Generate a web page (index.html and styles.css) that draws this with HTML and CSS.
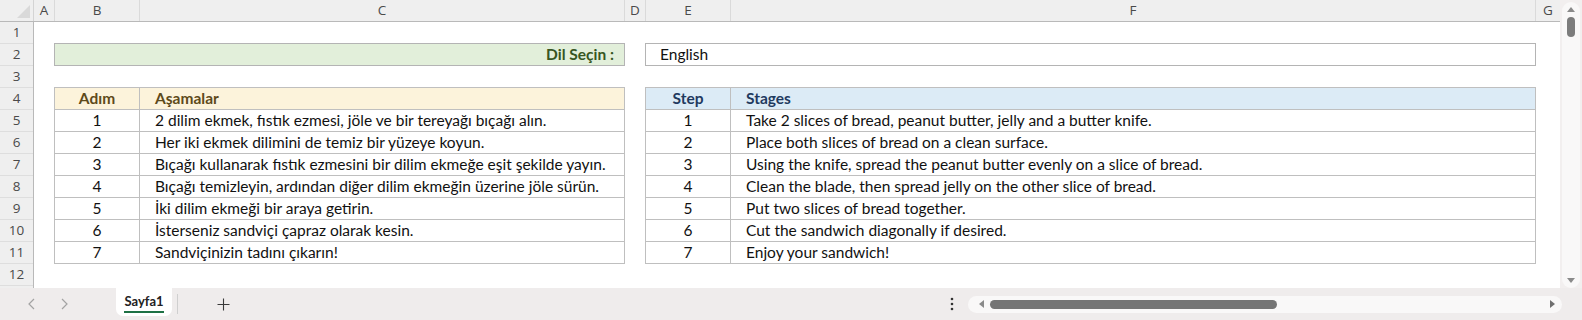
FILE: index.html
```html
<!DOCTYPE html>
<html lang="tr">
<head>
<meta charset="utf-8">
<title>Sayfa1</title>
<link rel="stylesheet" href="styles.css">
</head>
<body>
<div class="app">
  <div class="top">
    <div class="sheet">
      <div class="colhdr">
        <div class="corner">
          <svg width="33" height="21" viewBox="0 0 33 21"><polygon points="17,18 30,18 30,5" fill="#d9d9d9"/></svg>
        </div>
        <div class="ch w-a">A</div>
        <div class="ch w-b">B</div>
        <div class="ch w-c">C</div>
        <div class="ch w-d">D</div>
        <div class="ch w-e">E</div>
        <div class="ch w-f">F</div>
        <div class="ch w-g">G</div>
      </div>
      <div class="body">
        <div class="rowhdr">
          <div class="rh">1</div><div class="rh">2</div><div class="rh">3</div><div class="rh">4</div>
          <div class="rh">5</div><div class="rh">6</div><div class="rh">7</div><div class="rh">8</div>
          <div class="rh">9</div><div class="rh">10</div><div class="rh">11</div><div class="rh">12</div>
        </div>
        <div class="content">
          <div class="spacer"></div>
          <div class="langrow">
            <div class="langlabel">Dil Seçin :</div>
            <div class="langvalue">English</div>
          </div>
          <div class="spacer"></div>
          <div class="tables">
            <div class="tbl tbl-tr">
              <div class="tr thead"><div class="c num">Adım</div><div class="c txt">Aşamalar</div></div>
              <div class="tr"><div class="c num">1</div><div class="c txt">2 dilim ekmek, fıstık ezmesi, jöle ve bir tereyağı bıçağı alın.</div></div>
              <div class="tr"><div class="c num">2</div><div class="c txt">Her iki ekmek dilimini de temiz bir yüzeye koyun.</div></div>
              <div class="tr"><div class="c num">3</div><div class="c txt">Bıçağı kullanarak fıstık ezmesini bir dilim ekmeğe eşit şekilde yayın.</div></div>
              <div class="tr"><div class="c num">4</div><div class="c txt">Bıçağı temizleyin, ardından diğer dilim ekmeğin üzerine jöle sürün.</div></div>
              <div class="tr"><div class="c num">5</div><div class="c txt">İki dilim ekmeği bir araya getirin.</div></div>
              <div class="tr"><div class="c num">6</div><div class="c txt">İsterseniz sandviçi çapraz olarak kesin.</div></div>
              <div class="tr"><div class="c num">7</div><div class="c txt">Sandviçinizin tadını çıkarın!</div></div>
            </div>
            <div class="tbl tbl-en">
              <div class="tr thead"><div class="c num">Step</div><div class="c txt">Stages</div></div>
              <div class="tr"><div class="c num">1</div><div class="c txt">Take 2 slices of bread, peanut butter, jelly and a butter knife.</div></div>
              <div class="tr"><div class="c num">2</div><div class="c txt">Place both slices of bread on a clean surface.</div></div>
              <div class="tr"><div class="c num">3</div><div class="c txt">Using the knife, spread the peanut butter evenly on a slice of bread.</div></div>
              <div class="tr"><div class="c num">4</div><div class="c txt">Clean the blade, then spread jelly on the other slice of bread.</div></div>
              <div class="tr"><div class="c num">5</div><div class="c txt">Put two slices of bread together.</div></div>
              <div class="tr"><div class="c num">6</div><div class="c txt">Cut the sandwich diagonally if desired.</div></div>
              <div class="tr"><div class="c num">7</div><div class="c txt">Enjoy your sandwich!</div></div>
            </div>
          </div>
        </div>
      </div>
    </div>
    <div class="vscroll">
      <div class="vtrack">
        <svg class="varrow" width="10" height="8" viewBox="0 0 10 8"><polygon points="1,6 9,6 5,1" fill="#8a8a8a"/></svg>
        <div class="vthumb"></div>
        <div class="vfill"></div>
        <svg class="varrow" width="10" height="8" viewBox="0 0 10 8"><polygon points="1,2 9,2 5,7" fill="#8a8a8a"/></svg>
      </div>
    </div>
  </div>
  <div class="bottom">
    <div class="nav">
      <svg width="10" height="12" viewBox="0 0 10 12"><polyline points="7,1 2,6 7,11" fill="none" stroke="#a3a3a3" stroke-width="1.2"/></svg>
      <svg width="10" height="12" viewBox="0 0 10 12"><polyline points="3,1 8,6 3,11" fill="none" stroke="#a3a3a3" stroke-width="1.2"/></svg>
    </div>
    <div class="tab"><span class="tabname">Sayfa1</span></div>
    <div class="tabsep"></div>
    <div class="addtab">
      <svg width="13" height="13" viewBox="0 0 13 13"><path d="M6.5 0.5V12.5M0.5 6.5H12.5" stroke="#3a3a3a" stroke-width="1.1"/></svg>
    </div>
    <div class="grow"></div>
    <div class="dots">
      <svg width="4" height="14" viewBox="0 0 4 14"><circle cx="2" cy="2" r="1.3" fill="#333"/><circle cx="2" cy="7" r="1.3" fill="#333"/><circle cx="2" cy="12" r="1.3" fill="#333"/></svg>
    </div>
    <div class="htrack">
      <svg width="8" height="10" viewBox="0 0 8 10"><polygon points="6,1 6,9 1,5" fill="#8a8a8a"/></svg>
      <div class="hthumb"></div>
      <div class="grow"></div>
      <svg width="8" height="10" viewBox="0 0 8 10"><polygon points="2,1 2,9 7,5" fill="#6f6f6f"/></svg>
    </div>
  </div>
</div>
</body>
</html>
```
FILE: styles.css
```css
* { box-sizing: border-box; }
html, body { margin: 0; padding: 0; }
body {
  width: 1582px;
  height: 320px;
  overflow: hidden;
  background: #efeded;
  font-family: Lato, "Open Sans", "Liberation Sans", sans-serif;
}
.app { display: flex; flex-direction: column; width: 1582px; height: 320px; }
.top { display: flex; height: 288px; }
.sheet { width: 1560px; height: 288px; background: #fff; display: flex; flex-direction: column; overflow: hidden; }

.colhdr { display: flex; height: 22px; background: #efefef; border-bottom: 1px solid #b9b9b9; flex-shrink: 0; }
.corner { width: 34px; border-right: 1px solid #d4d4d4; display: flex; }
.ch {
  border-right: 1px solid #dadada;
  text-align: center;
  font-family: "Open Sans", "Noto Sans", sans-serif;
  font-size: 13.5px;
  line-height: 21px;
  color: #4a4a4a;
}
.w-a { width: 21px; }
.w-b { width: 85px; }
.w-c { width: 485px; }
.w-d { width: 21px; }
.w-e { width: 85px; }
.w-f { width: 805px; }
.w-g { width: 24px; border-right: none; }

.body { display: flex; flex: 1; }
.rowhdr { width: 34px; background: #efefef; border-right: 1px solid #b9b9b9; display: flex; flex-direction: column; }
.rh {
  height: 22px;
  border-bottom: 1px solid #dedede;
  text-align: center;
  font-family: "Open Sans", "Noto Sans", sans-serif;
  font-size: 13.5px;
  line-height: 21px;
  color: #4a4a4a;
  flex-shrink: 0;
}

.content { display: flex; flex-direction: column; padding-left: 20px; }
.spacer { height: 21px; }
.langrow { display: flex; gap: 20px; height: 23px; }
.langlabel {
  width: 571px;
  border: 1px solid #b4b4b4;
  background: #e2efda;
  color: #375623;
  font-weight: 700;
  font-size: 15.5px;
  line-height: 21px;
  text-align: right;
  padding-right: 10px;
}
.langvalue {
  width: 891px;
  border: 1px solid #b4b4b4;
  color: #111;
  font-size: 15.5px;
  line-height: 21px;
  padding-left: 14px;
}

.tables { display: flex; gap: 20px; }
.tbl { border-left: 1px solid #bfbfbf; border-top: 1px solid #bfbfbf; display: flex; flex-direction: column; }
.tr { display: flex; height: 22px; }
.c {
  border-right: 1px solid #bfbfbf;
  border-bottom: 1px solid #bfbfbf;
  font-size: 15.5px;
  line-height: 21px;
  color: #111;
  white-space: nowrap;
  overflow: hidden;
}
.c.num { width: 85px; text-align: center; }
.c.txt { padding-left: 15px; }
.tbl-tr .c.txt { width: 485px; }
.tbl-en .c.txt { width: 805px; }
.thead .c { font-weight: 700; }
.tbl-tr .thead .c { background: #fcf3db; color: #5e4a1a; }
.tbl-en .thead .c { background: #dcebf6; color: #1f3a5f; }

.vscroll { width: 22px; height: 288px; background: #f2efef; padding: 2px 2px 0 2px; }
.vtrack {
  height: 100%;
  background: #f9f8f8;
  border-radius: 9px;
  display: flex;
  flex-direction: column;
  align-items: center;
  padding: 4px 0 4px;
}
.vthumb { width: 8px; height: 20px; background: #7c7c7c; border-radius: 4px; margin-top: 3px; }
.vfill { flex: 1; }

.bottom { display: flex; align-items: center; height: 32px; background: #efecec; }
.nav { display: flex; gap: 22px; padding-left: 27px; width: 116px; }
.tab {
  align-self: flex-start;
  height: 28px;
  width: 56px;
  background: #fff;
  border-radius: 0 0 7px 7px;
  display: flex;
  justify-content: center;
}
.tabname {
  font-weight: 700;
  font-size: 13px;
  color: #222;
  line-height: 20px;
  padding-top: 3px;
  border-bottom: 2.5px solid #1e7145;
  height: 25px;
}
.tabsep { width: 1px; height: 20px; background: #cfcfcf; margin-left: 5px; }
.addtab { margin-left: 39px; display: flex; }
.grow { flex: 1; }
.dots { display: flex; margin-right: 14px; }
.htrack {
  width: 594px;
  height: 17px;
  background: #f9f8f8;
  border-radius: 9px;
  display: flex;
  align-items: center;
  padding: 0 6px 0 10px;
  margin-right: 20px;
}
.hthumb { width: 287px; height: 9px; background: #757575; border-radius: 5px; margin-left: 4px; }
```
